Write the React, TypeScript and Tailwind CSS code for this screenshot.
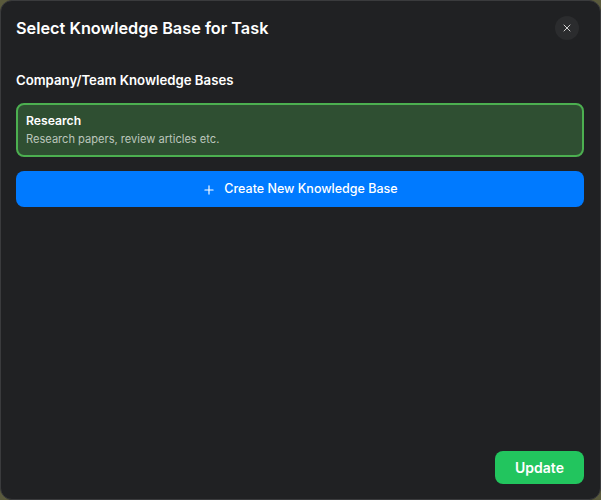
import { Plus, X } from "lucide-react";

/** Knowledge base picker dialog. */
export default function App() {
  return (
    <div className="h-[500px] w-[601px] bg-[#5a5a3c] font-['Inter',sans-serif]">
      <div className="flex h-full flex-col rounded-xl border border-[#3a3b3d] bg-[#202123] pb-[15px] pl-[15px] pr-4 pt-[15px] text-white">
        <header className="flex h-6 items-center justify-between pr-[5px]">
          <h2 className="text-[16.3px] font-semibold leading-6">Select Knowledge Base for Task</h2>
          <button className="flex size-6 items-center justify-center rounded-full bg-[#2b2c2e] text-[#d0d0d0]">
            <X className="size-3" aria-hidden />
          </button>
        </header>

        <h3 className="mt-[30px] text-[13.2px] font-semibold leading-5">Company/Team Knowledge Bases</h3>

        <div className="mt-[13px] h-[54px] rounded-lg border-2 border-[#4caf50] bg-[#2f4f32] px-2 pt-2">
          <p className="text-[12.2px] font-semibold leading-4">Research</p>
          <p className="mt-[2px] text-[11.1px] leading-4 text-[#bcc6bc]">Research papers, review articles etc.</p>
        </div>

        <button className="mt-[14px] flex h-9 items-center justify-center gap-[8px] rounded-lg bg-[#007aff] pt-px text-[12.5px] font-medium">
          <Plus className="size-[14px]" strokeWidth={2} aria-hidden />
          Create New Knowledge Base
        </button>

        <div className="mt-auto flex justify-end">
          <button className="h-[33px] w-[89px] rounded-lg bg-[#22c55e] text-sm font-semibold">Update</button>
        </div>
      </div>
    </div>
  );
}
